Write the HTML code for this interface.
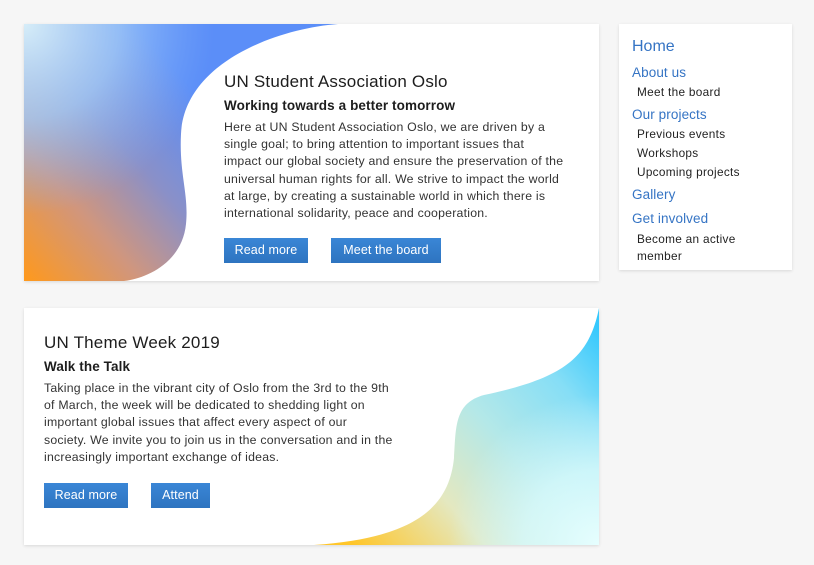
<!DOCTYPE html>
<html><head><meta charset="utf-8"><style>
*{margin:0;padding:0;box-sizing:border-box}
body{width:814px;height:565px;background:#f6f6f6;font-family:"Liberation Sans",sans-serif;color:#222;position:relative;overflow:hidden}
.card{position:absolute;background:#fff;box-shadow:0 1px 3px rgba(0,0,0,.12);overflow:hidden}
.card svg{position:absolute;left:0;top:0}
.t{position:absolute;white-space:nowrap}
h1{font-size:17px;font-weight:normal;color:#1d1d1d;letter-spacing:.2px}
h2{font-size:13.5px;font-weight:bold;color:#1d1d1d;letter-spacing:.1px}
p{font-size:12.3px;line-height:17.2px;color:#333;letter-spacing:.22px}
.btn{position:absolute;height:25px;background:linear-gradient(#3a86d6,#2e74c0);color:#fff;font-size:12.5px;line-height:25px;text-align:center;letter-spacing:.1px}
.side{position:absolute;left:619px;top:24px;width:173px;height:246px;background:#fff;box-shadow:0 1px 3px rgba(0,0,0,.12)}
.side div{position:absolute;left:13px;white-space:nowrap;color:#3574c4}
.side .s{left:18px;color:#222;font-size:11.8px;letter-spacing:.3px}
.side .m{font-size:13.5px;letter-spacing:.1px}
</style></head><body>
<div class="card" style="left:24px;top:24px;width:575px;height:257px">
<svg width="575" height="257">
<defs>
<linearGradient id="g1" gradientUnits="userSpaceOnUse" x1="0" y1="257" x2="190" y2="90">
<stop offset="0" stop-color="#ff991c"/><stop offset="0.35" stop-color="#d0967e"/><stop offset="0.65" stop-color="#8a90c8"/><stop offset="1" stop-color="#5b8ef8"/></linearGradient>
<radialGradient id="r1" gradientUnits="userSpaceOnUse" cx="0" cy="0" r="190">
<stop offset="0" stop-color="#d6edf8"/><stop offset="0.5" stop-color="#a4cdf8" stop-opacity="0.75"/><stop offset="1" stop-color="#80b0f8" stop-opacity="0"/></radialGradient>
<clipPath id="c1"><path d="M0 0H314C250 5 160 40 157 110C155 150 165 170 162 200C158 240 120 255 100 257H0Z"/></clipPath>
</defs>
<g clip-path="url(#c1)"><rect width="320" height="257" fill="url(#g1)"/><rect width="320" height="257" fill="url(#r1)"/></g>
</svg>
<h1 class="t" style="left:200px;top:48px">UN Student Association Oslo</h1>
<h2 class="t" style="left:200px;top:74px">Working towards a better tomorrow</h2>
<p class="t" style="left:200px;top:95px">Here at UN Student Association Oslo, we are driven by a<br>single goal; to bring attention to important issues that<br>impact our global society and ensure the preservation of the<br>universal human rights for all. We strive to impact the world<br>at large, by creating a sustainable world in which there is<br>international solidarity, peace and cooperation.</p>
<div class="btn" style="left:200px;top:214px;width:84px">Read more</div>
<div class="btn" style="left:307px;top:214px;width:110px">Meet the board</div>
</div>
<div class="card" style="left:24px;top:308px;width:575px;height:237px">
<svg width="575" height="237">
<defs>
<linearGradient id="g2" gradientUnits="userSpaceOnUse" x1="330" y1="237" x2="575" y2="20">
<stop offset="0" stop-color="#ffc62a"/><stop offset="0.3" stop-color="#e4e8c0"/><stop offset="0.55" stop-color="#b4e8e8"/><stop offset="0.8" stop-color="#86def6"/><stop offset="1" stop-color="#35c8fd"/></linearGradient>
<radialGradient id="r2" gradientUnits="userSpaceOnUse" cx="575" cy="237" r="150"><stop offset="0" stop-color="#e6fefe"/><stop offset="0.5" stop-color="#d8fafc" stop-opacity="0.8"/><stop offset="1" stop-color="#d0f6fc" stop-opacity="0"/></radialGradient>
</defs>
<path d="M575 0C565 50 540 70 460 87C430 95 432 120 430 150C425 200 390 230 290 237H575Z" fill="url(#g2)"/>
<path d="M575 0C565 50 540 70 460 87C430 95 432 120 430 150C425 200 390 230 290 237H575Z" fill="url(#r2)"/>
</svg>
<h1 class="t" style="left:20px;top:25px">UN Theme Week 2019</h1>
<h2 class="t" style="left:20px;top:51px">Walk the Talk</h2>
<p class="t" style="left:20px;top:72px">Taking place in the vibrant city of Oslo from the 3rd to the 9th<br>of March, the week will be dedicated to shedding light on<br>important global issues that affect every aspect of our<br>society. We invite you to join us in the conversation and in the<br>increasingly important exchange of ideas.</p>
<div class="btn" style="left:20px;top:175px;width:84px">Read more</div>
<div class="btn" style="left:127px;top:175px;width:59px">Attend</div>
</div>
<div class="side">
<div style="top:14px;font-size:16px">Home</div>
<div class="m" style="top:41px">About us</div>
<div class="s" style="top:61px">Meet the board</div>
<div class="m" style="top:83px">Our projects</div>
<div class="s" style="top:103px">Previous events</div>
<div class="s" style="top:122px">Workshops</div>
<div class="s" style="top:141px">Upcoming projects</div>
<div class="m" style="top:163px">Gallery</div>
<div class="m" style="top:187px">Get involved</div>
<div class="s" style="top:207px;line-height:17px">Become an active<br>member</div>
</div>
</body></html>
